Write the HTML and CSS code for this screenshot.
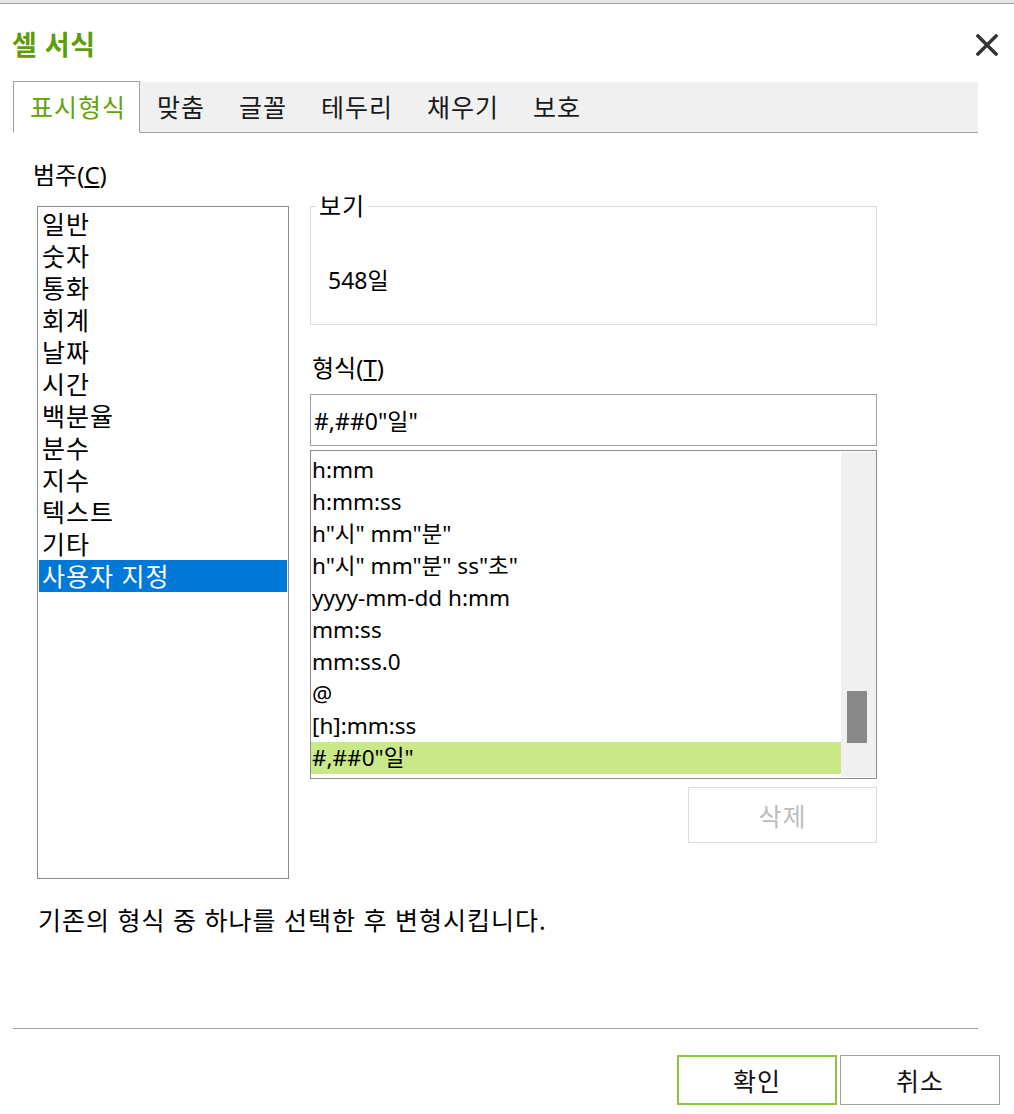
FILE: index.html
```html
<!DOCTYPE html>
<html lang="ko">
<head>
<meta charset="utf-8">
<title>셀 서식</title>
<link rel="stylesheet" href="styles.css">
</head>
<body>
<div class="dialog">
  <div class="topline"></div>
  <header class="header">
    <h1 class="title">셀 서식</h1>
    <button class="close" aria-label="닫기">
      <svg width="22" height="22" viewBox="0 0 22 22"><path d="M2 2 L20 20 M20 2 L2 20" stroke="#333" stroke-width="3.4" stroke-linecap="square" fill="none"/></svg>
    </button>
  </header>
  <nav class="tabs">
    <div class="tab active">표시형식</div>
    <div class="tab">맞춤</div>
    <div class="tab">글꼴</div>
    <div class="tab">테두리</div>
    <div class="tab">채우기</div>
    <div class="tab">보호</div>
  </nav>
  <main class="content">
    <div class="left">
      <div class="label">범주(<u>C</u>)</div>
      <ul class="catlist">
        <li>일반</li>
        <li>숫자</li>
        <li>통화</li>
        <li>회계</li>
        <li>날짜</li>
        <li>시간</li>
        <li>백분율</li>
        <li>분수</li>
        <li>지수</li>
        <li>텍스트</li>
        <li>기타</li>
        <li class="selected">사용자 지정</li>
      </ul>
    </div>
    <div class="right">
      <div class="preview">
        <span class="legend">보기</span>
        <div class="sample">548일</div>
      </div>
      <div class="label fmt-label">형식(<u>T</u>)</div>
      <div class="input">#,##0"일"</div>
      <div class="fmtlist">
        <ul class="fmtitems">
          <li>h:mm</li>
          <li>h:mm:ss</li>
          <li>h"시" mm"분"</li>
          <li>h"시" mm"분" ss"초"</li>
          <li>yyyy-mm-dd h:mm</li>
          <li>mm:ss</li>
          <li>mm:ss.0</li>
          <li>@</li>
          <li>[h]:mm:ss</li>
          <li class="selected">#,##0"일"</li>
        </ul>
        <div class="scroll"><div class="thumb"></div></div>
      </div>
      <button class="delete" disabled>삭제</button>
    </div>
  </main>
  <p class="desc">기존의 형식 중 하나를 선택한 후 변형시킵니다.</p>
  <div class="sep"></div>
  <footer class="footer">
    <button class="btn ok">확인</button>
    <button class="btn">취소</button>
  </footer>
</div>
</body>
</html>
```
FILE: styles.css
```css
html, body {
  margin: 0;
  padding: 0;
}
body {
  width: 1014px;
  height: 1114px;
  overflow: hidden;
  background: #fff;
  color: #000;
  font-family: "Noto Sans", "Noto Sans CJK KR", sans-serif;
  font-size: 25px;
  letter-spacing: 1px;
}
.topline {
  height: 3px;
  background: #e4e4e4;
  border-bottom: 1px solid #a6a6a6;
}
.header {
  height: 78px;
  box-sizing: border-box;
  padding: 4px 16px 0 12px;
  display: flex;
  align-items: center;
  justify-content: space-between;
}
.title {
  margin: 0;
  font-size: 27px;
  line-height: 30px;
  font-weight: 700;
  letter-spacing: 0.5px;
  color: #5e9c0a;
}
.close {
  width: 22px;
  height: 22px;
  padding: 0;
  border: 0;
  background: none;
  display: block;
}
.close svg { display: block; }
.tabs {
  display: flex;
  height: 50px;
  margin: 0 36px 0 13px;
  background: #f0f0f0;
  border-bottom: 1px solid #a0a0a0;
}
.tab {
  padding: 0 17px;
  line-height: 50px;
  color: #1a1a1a;
}
.tab.active {
  padding: 0 13px 0 16px;
  height: 50px;
  margin-top: -1px;
  margin-bottom: -1px;
  background: #fff;
  border: 1px solid #a0a0a0;
  border-bottom: 1px solid #fff;
  line-height: 50px;
  color: #62a30c;
}
.content {
  display: grid;
  grid-template-columns: 256px 567px;
  column-gap: 21px;
  padding-left: 33px;
  align-items: start;
}
.label {
  line-height: 30px;
  font-size: 24px;
  letter-spacing: 0;
}
.left .label {
  margin-top: 27px;
}
.catlist {
  list-style: none;
  margin: 16px 0 0 4px;
  padding: 1px 1px;
  width: 252px;
  height: 673px;
  box-sizing: border-box;
  border: 1px solid #8b8b98;
}
.catlist li {
  line-height: 32px;
  padding-left: 3px;
}
.catlist li.selected {
  background: #0078d7;
  color: #fff;
}
.right {
  margin-top: 73px;
}
.preview {
  position: relative;
  height: 119px;
  box-sizing: border-box;
  border: 1px solid #dadada;
}
.legend {
  position: absolute;
  top: -14px;
  left: 5px;
  padding: 0 3px;
  background: #fff;
  line-height: 26px;
  font-size: 24px;
}
.sample {
  padding: 59px 0 0 17px;
  line-height: 28px;
  font-size: 23px;
  letter-spacing: 0;
}
.fmt-label {
  margin-top: 28px;
  padding-left: 2px;
}
.input {
  margin-top: 11px;
  height: 52px;
  box-sizing: border-box;
  border: 1px solid #a0a0a0;
  padding: 3px 0 0 3px;
  line-height: 47px;
  font-size: 23px;
  letter-spacing: 0;
}
.fmtlist {
  margin-top: 4px;
  height: 329px;
  box-sizing: border-box;
  border: 1px solid #8b8b98;
  display: flex;
}
.fmtitems {
  flex: 1;
  list-style: none;
  margin: 0;
  padding: 3px 0 0 0;
  font-size: 22.5px;
  letter-spacing: 0;
}
.fmtitems li {
  line-height: 32px;
  padding-left: 1px;
  white-space: nowrap;
}
.fmtitems li.selected {
  background: #c9e886;
}
.scroll {
  width: 35px;
  background: #f0f0f0;
  margin: 1px 0;
}
.thumb {
  margin: 239px 0 0 6px;
  width: 20px;
  height: 52px;
  background: #888;
}
.delete {
  display: block;
  margin: 8px 0 0 auto;
  width: 189px;
  height: 56px;
  border: 1px solid #dcdcdc;
  background: #fff;
  color: #bdbdbd;
  font: inherit;
  letter-spacing: 1px;
  padding: 0;
}
.desc {
  margin: 26px 0 0 38px;
  line-height: 30px;
}
.sep {
  margin: 93px 36px 0 13px;
  border-top: 1px solid #a0a0a0;
}
.footer {
  display: flex;
  justify-content: flex-end;
  gap: 3px;
  padding: 26px 14px 0 0;
}
.btn {
  width: 160px;
  height: 50px;
  box-sizing: border-box;
  border: 1px solid #a0a0a0;
  background: #fff;
  font: inherit;
  letter-spacing: 1px;
  color: #111;
  padding: 0;
}
.btn.ok {
  border: 2px solid #8cc63e;
}
```
